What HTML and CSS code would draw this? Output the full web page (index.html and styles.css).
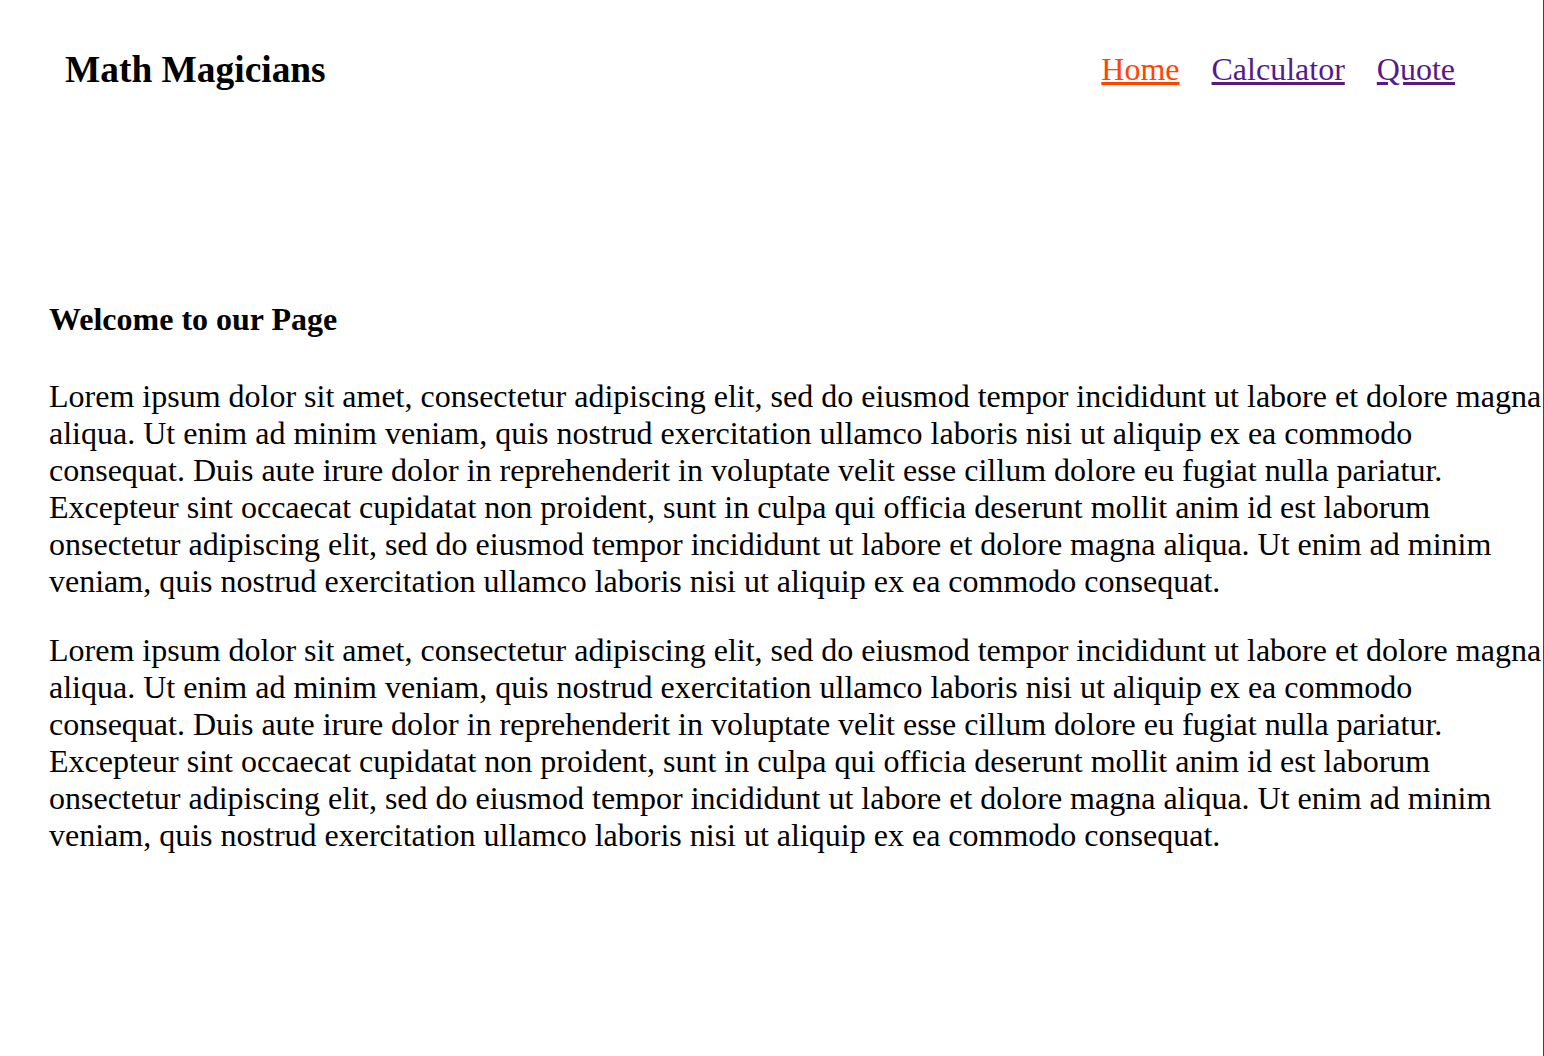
FILE: index.html
```html
<!DOCTYPE html>
<html lang="en">
<head>
<meta charset="utf-8">
<title>Math Magicians</title>
<link rel="stylesheet" href="styles.css">
</head>
<body>
<div class="page">
  <header class="header">
    <h1 class="logo">Math Magicians</h1>
    <nav class="nav">
      <a class="nav-link active" href="#">Home</a>
      <a class="nav-link" href="#">Calculator</a>
      <a class="nav-link" href="#">Quote</a>
    </nav>
  </header>
  <main class="main">
    <h2 class="title">Welcome to our Page</h2>
    <p class="text">Lorem ipsum dolor sit amet, consectetur adipiscing elit, sed do eiusmod tempor incididunt ut labore et dolore magna aliqua. Ut enim ad minim veniam, quis nostrud exercitation ullamco laboris nisi ut aliquip ex ea commodo consequat. Duis aute irure dolor in reprehenderit in voluptate velit esse cillum dolore eu fugiat nulla pariatur. Excepteur sint occaecat cupidatat non proident, sunt in culpa qui officia deserunt mollit anim id est laborum onsectetur adipiscing elit, sed do eiusmod tempor incididunt ut labore et dolore magna aliqua. Ut enim ad minim veniam, quis nostrud exercitation ullamco laboris nisi ut aliquip ex ea commodo consequat.</p>
    <p class="text">Lorem ipsum dolor sit amet, consectetur adipiscing elit, sed do eiusmod tempor incididunt ut labore et dolore magna aliqua. Ut enim ad minim veniam, quis nostrud exercitation ullamco laboris nisi ut aliquip ex ea commodo consequat. Duis aute irure dolor in reprehenderit in voluptate velit esse cillum dolore eu fugiat nulla pariatur. Excepteur sint occaecat cupidatat non proident, sunt in culpa qui officia deserunt mollit anim id est laborum onsectetur adipiscing elit, sed do eiusmod tempor incididunt ut labore et dolore magna aliqua. Ut enim ad minim veniam, quis nostrud exercitation ullamco laboris nisi ut aliquip ex ea commodo consequat.</p>
  </main>
</div>
</body>
</html>
```
FILE: styles.css
```css
html, body {
  margin: 0;
  padding: 0;
  background: #fff;
}

body {
  font-family: "Liberation Serif", "Times New Roman", serif;
  color: #000;
}

.page {
  min-height: 1056px;
  box-sizing: border-box;
  border-right: 1px solid #444;
}

.header {
  display: flex;
  justify-content: space-between;
  align-items: center;
  padding: 48px 88px 48px 65px;
}

.logo {
  margin: 0;
  font-size: 37.4px;
  font-weight: bold;
}

.nav {
  display: flex;
  gap: 32px;
}

.nav-link {
  font-size: 32px;
  color: #551a8b;
  text-decoration: underline;
}

.nav-link.active {
  color: #ff4500;
}

.main {
  padding: 162px 0 0 49px;
}

.title {
  margin: 0 0 40px;
  font-size: 32px;
  font-weight: bold;
}

.text {
  margin: 0 0 32px;
  font-size: 32px;
}
```
